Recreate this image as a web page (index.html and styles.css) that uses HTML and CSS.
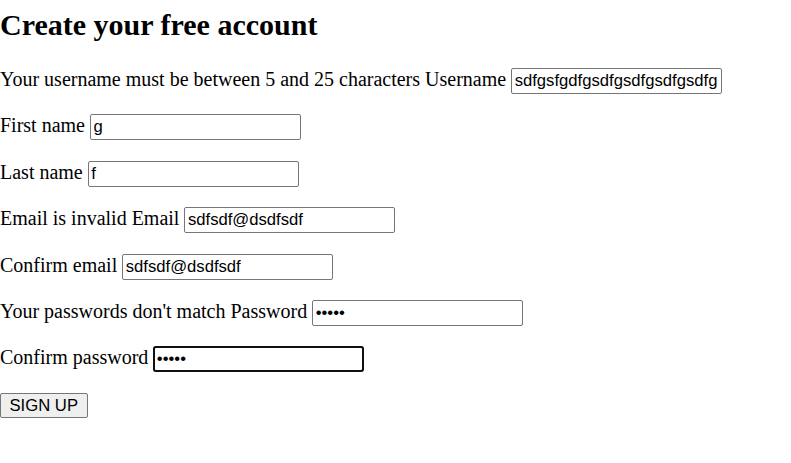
FILE: index.html
```html
<!DOCTYPE html>
<html>
<head>
<meta charset="utf-8">
<link rel="stylesheet" href="styles.css">
</head>
<body>
<form class="signup">
  <h1 class="title">Create your free account</h1>
  <p class="row">Your username must be between 5 and 25 characters Username <input class="field" type="text" value="sdfgsfgdfgsdfgsdfgsdfgsdfg"></p>
  <p class="row">First name <input class="field" type="text" value="g"></p>
  <p class="row">Last name <input class="field" type="text" value="f"></p>
  <p class="row">Email is invalid Email <input class="field" type="text" value="sdfsdf@dsdfsdf"></p>
  <p class="row">Confirm email <input class="field" type="text" value="sdfsdf@dsdfsdf"></p>
  <p class="row">Your passwords don't match Password <input class="field" type="password" value="12345"></p>
  <p class="row">Confirm password <input class="field focused" type="password" value="12345"></p>
  <p class="row"><button class="btn" type="button">SIGN UP</button></p>
</form>
</body>
</html>
```
FILE: styles.css
```css
html, body {
  margin: 0;
  padding: 0;
  background: #fff;
}
body {
  font-family: "Liberation Serif", "Times New Roman", serif;
  font-size: 20px;
  color: #000;
}
.title {
  font-size: 30px;
  font-weight: bold;
  margin: 8px 0 26px;
}
.row {
  margin: 20.4px 0;
}
.field {
  font-family: "Liberation Sans", Arial, sans-serif;
  font-size: 16.67px;
  width: 204px;
  height: 22px;
  padding: 1px 2.5px;
  border: 1px solid #767676;
  border-radius: 2px;
  color: #000;
  background: #fff;
  box-sizing: content-box;
  outline: none;
}
.field.focused {
  outline: 2px solid #101010;
  outline-offset: -2px;
  border-radius: 3px;
}
.btn {
  font-family: "Liberation Sans", Arial, sans-serif;
  font-size: 16.67px;
  white-space: nowrap;
  background: #efefef;
  border: 1px solid #767676;
  border-radius: 2px;
  padding: 1px 8.5px;
  color: #000;
  height: 25px;
}
```
